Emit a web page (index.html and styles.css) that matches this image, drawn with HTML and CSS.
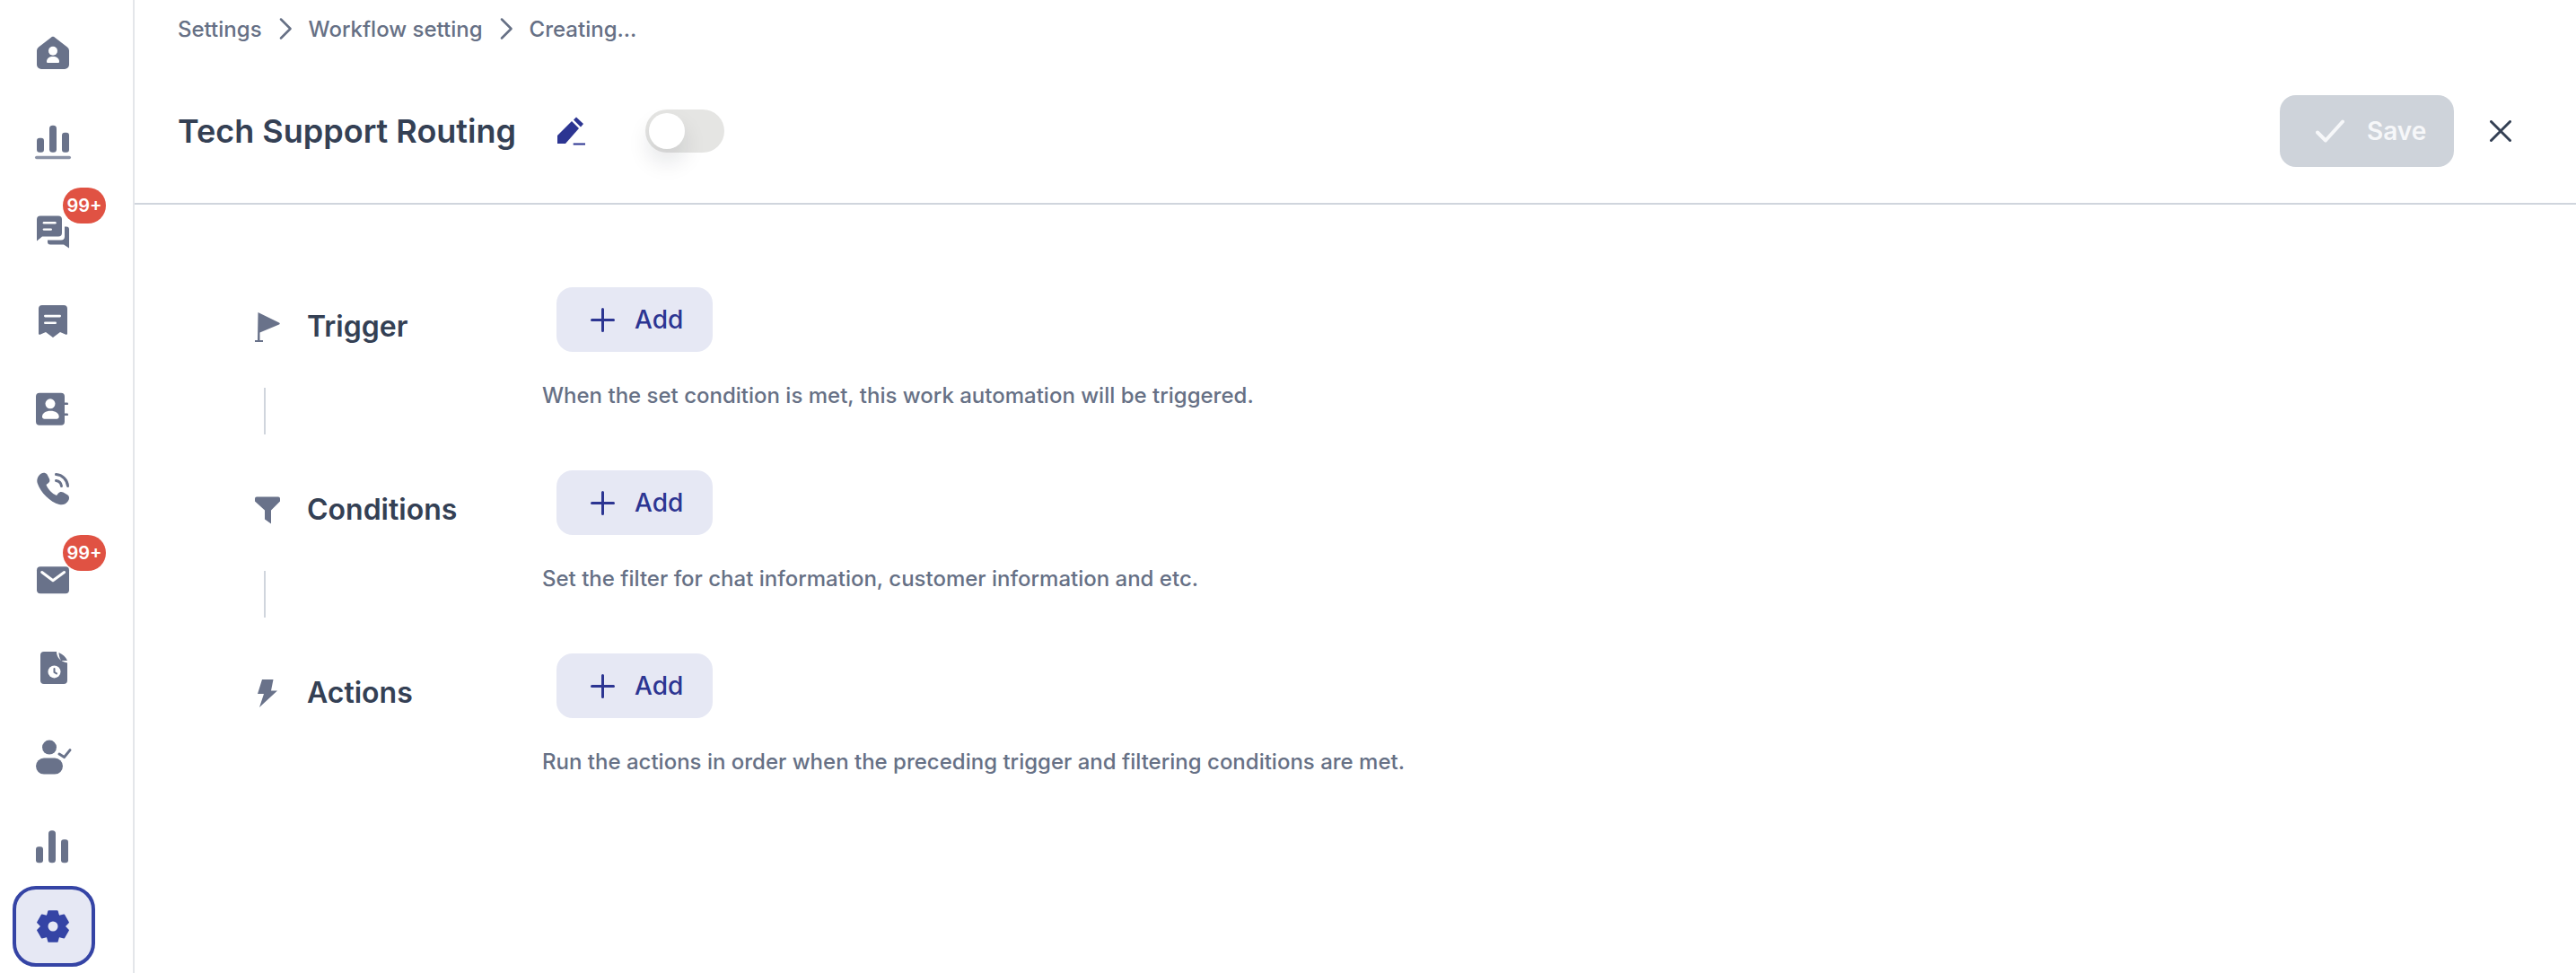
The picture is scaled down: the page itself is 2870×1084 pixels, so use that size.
FILE: index.html
```html
<!DOCTYPE html>
<html lang="en">

<head>
    <meta charset="UTF-8">
    <meta name="viewport" content="width=device-width, initial-scale=1.0">
    <title>Tech Support Routing</title>
    <link rel="stylesheet" href="styles.css">
</head>

<body>
    <div class="app">
        <nav class="sidebar">
            <a class="nav-item">
                <svg class="nav-icon" viewBox="0 0 60 60"><g transform="translate(11 12)">
                    <path d="M15.6.9a3.6 3.6 0 0 1 4.8 0L34 11.6a5 5 0 0 1 2 4V31a5 5 0 0 1-5 5H5a5 5 0 0 1-5-5V15.6a5 5 0 0 1 2-4z"/>
                    <circle class="cut" cx="18" cy="15.7" r="5"/>
                    <path class="cut" d="M11 27.5c0-3.500 3-5.500 7-5.500s7 2 7 5.500c0 1-.5 1.500-1.500 1.500h-11c-1 0-1.500-.5-1.500-1.500z"/>
                </g></svg>
            </a>
            <a class="nav-item">
                <svg class="nav-icon" viewBox="0 0 60 60"><g transform="translate(9 13.700)">
                    <rect x="2" y="14" width="8" height="16" rx="3"/>
                    <rect x="16" y="0" width="8" height="30" rx="3.500"/>
                    <rect x="30" y="8" width="8" height="22" rx="3"/>
                    <rect class="soft" x="0" y="34" width="40" height="3.500" rx="1.700"/>
                </g></svg>
            </a>
            <a class="nav-item">
                <svg class="nav-icon" viewBox="0 0 60 60"><g transform="translate(11 16.400)">
                    <path d="M4 0H24a4 4 0 0 1 4 4V19a4 4 0 0 1-4 4H6L0 28V4a4 4 0 0 1 4-4z"/>
                    <path d="M31 12h2a3 3 0 0 1 3 3V36l-6-4H15a3 3 0 0 1-3-3v-2H27a4 4 0 0 0 4-4z"/>
                    <rect class="cut" x="6.700" y="6.700" width="15" height="2.400" rx="1.200"/>
                    <rect class="cut" x="6.700" y="14" width="10.300" height="2.400" rx="1.200"/>
                </g></svg>
                <span class="badge">99+</span>
            </a>
            <a class="nav-item">
                <svg class="nav-icon" viewBox="0 0 60 60"><g transform="translate(13 19.100)">
                    <path d="M4 0H28a4 4 0 0 1 4 4V32l-1 1-7-3-8 6-8-6-7 3-1-1V4a4 4 0 0 1 4-4z"/>
                    <rect class="cut" x="6" y="10.700" width="19" height="2.600" rx="1.300"/>
                    <rect class="cut" x="6" y="18.300" width="14" height="2.600" rx="1.300"/>
                </g></svg>
            </a>
            <a class="nav-item">
                <svg class="nav-icon" viewBox="0 0 60 60"><g transform="translate(10 19.800)">
                    <rect width="32" height="36" rx="4"/>
                    <rect x="31" y="10.800" width="5" height="2.500" rx="1.200"/>
                    <rect x="31" y="22.800" width="5" height="2.500" rx="1.200"/>
                    <circle class="cut" cx="16" cy="12" r="5.500"/>
                    <path class="cut" d="M7 26.500c0-4 4-6.500 9.300-6.500s9.400 2.500 9.400 6.500c0 1.500-1 2.500-2.500 2.500H9.500C8 29 7 28 7 26.500z"/>
                </g></svg>
            </a>
            <a class="nav-item">
                <svg class="nav-icon" viewBox="0 0 60 60"><g transform="translate(11 11.500)">
                    <path d="M5 1C7-.5 10 0 11.500 2L14 7C15 9 14 11 12.500 12L10.500 13.500C12 18 17 23.500 22 25.500L24 23C25 21.500 27.500 21 29.500 22L34.500 25C36.500 26.500 36.500 29.500 35 31.500 33 35 29 36.500 25 35.500 15 33 4 22 .8 12-.5 8 1 3.500 5 1z"/>
                    <path class="arc" d="M21.500 2A14 14 0 0 1 34.500 15"/>
                    <path class="arc" d="M21.500 9A7 7 0 0 1 27.500 15"/>
                </g></svg>
            </a>
            <a class="nav-item">
                <svg class="nav-icon" viewBox="0 0 60 60"><g transform="translate(11 18.200)">
                    <rect width="36" height="30" rx="4"/>
                    <path class="cut-line" d="M5.700 6.300 18 15.500 30.600 6.300"/>
                </g></svg>
                <span class="badge badge-mail">99+</span>
            </a>
            <a class="nav-item">
                <svg class="nav-icon" viewBox="0 0 60 60"><g transform="translate(15 15.900)">
                    <path d="M4 0H18C18 6 22 11 30 12.500V32a4 4 0 0 1-4 4H4a4 4 0 0 1-4-4V4a4 4 0 0 1 4-4z"/>
                    <path d="M20.500 1C25 3 28.500 6 30 10H23C21.500 7.500 20.500 4 20.500 1z"/>
                    <circle class="cut" cx="15.500" cy="22.500" r="7"/>
                    <path class="arc thin" d="M15.500 19v4l2.500 1.500"/>
                </g></svg>
            </a>
            <a class="nav-item">
                <svg class="nav-icon" viewBox="0 0 60 60"><g transform="translate(10 17.600)">
                    <circle cx="15" cy="8" r="8"/>
                    <rect y="20" width="30" height="18" rx="9"/>
                    <path class="arc" d="M26 15.500l5.500 3.500 6.500-8"/>
                </g></svg>
            </a>
            <a class="nav-item">
                <svg class="nav-icon" viewBox="0 0 60 60"><g transform="translate(10 20.300)">
                    <rect y="18" width="8" height="18" rx="3"/>
                    <rect x="14" width="8" height="36" rx="3.500"/>
                    <rect x="28" y="10" width="8" height="26" rx="3"/>
                </g></svg>
            </a>
            <a class="nav-item active">
                <svg class="nav-icon" viewBox="0 0 60 60"><g transform="translate(11 12)">
                    <g transform="translate(18 18) scale(.94) translate(-18 -18)">
                        <polygon class="gear" points="13,0 23,0 24.750,6.310 31.090,4.670 36.090,13.330 31.500,18 36.090,22.670 31.090,31.330 24.750,29.690 23,36 13,36 11.250,29.690 4.910,31.330 -.09,22.670 4.500,18 -.09,13.330 4.910,4.670 11.250,6.310"/>
                    </g>
                    <circle class="gear-hole" cx="18" cy="18" r="5.500"/>
                </g></svg>
            </a>
        </nav>

        <main class="content">
            <header class="page-head">
                <div class="crumbs">
                    <span>Settings</span>
                    <svg class="crumb-arrow" viewBox="0 0 14 24"><path d="M2 1.500 12.500 12 2 22.500"/></svg>
                    <span>Workflow setting</span>
                    <svg class="crumb-arrow" viewBox="0 0 14 24"><path d="M2 1.500 12.500 12 2 22.500"/></svg>
                    <span>Creating...</span>
                </div>
                <div class="title-row">
                    <h1 class="title">Tech Support Routing</h1>
                    <svg class="pen" viewBox="0 0 31 32">
                        <path d="M0 30V21L16 5 24 13 9 30z"/>
                        <path d="M18 3.500 21 .5 29 8 26 11.500z"/>
                        <rect x="17.700" y="29.500" width="13.300" height="2"/>
                    </svg>
                    <div class="toggle"><span class="knob"></span></div>
                    <div class="head-actions">
                        <button class="btn-save">
                            <svg class="save-check" viewBox="0 0 32 26"><path d="M2 14.500 11 23.500 30 2.500"/></svg>
                            Save
                        </button>
                        <svg class="close" viewBox="0 0 24 24"><path d="M1.500 1.500 22.500 22.500M22.500 1.500 1.500 22.500"/></svg>
                    </div>
                </div>
            </header>

            <section class="steps">
                <div class="step">
                    <div class="step-left">
                        <div class="step-head">
                            <svg class="step-icon" viewBox="0 0 28 33"><path d="M3.500 0 27 11.500Q28.500 12.500 27 13.500L5.500 22.500V31H9V33H0V31H3z"/></svg>
                            <span class="step-name">Trigger</span>
                        </div>
                        <div class="step-line"></div>
                    </div>
                    <div class="step-right">
                        <button class="btn-add">
                            <svg class="plus" viewBox="0 0 27 27"><path d="M13.500 1.500V25.500M1.500 13.500H25.500"/></svg>
                            Add
                        </button>
                        <p class="step-desc">When the set condition is met, this work automation will be triggered.</p>
                    </div>
                </div>
                <div class="step">
                    <div class="step-left">
                        <div class="step-head">
                            <svg class="step-icon" viewBox="0 0 28 33"><path d="M2 1.500H26Q28 1.500 28 3.500V6.500L18 16.500V31.500L11 26.500V16.500L0 6.500V3.500Q0 1.500 2 1.500z"/></svg>
                            <span class="step-name">Conditions</span>
                        </div>
                        <div class="step-line"></div>
                    </div>
                    <div class="step-right">
                        <button class="btn-add">
                            <svg class="plus" viewBox="0 0 27 27"><path d="M13.500 1.500V25.500M1.500 13.500H25.500"/></svg>
                            Add
                        </button>
                        <p class="step-desc">Set the filter for chat information, customer information and etc.</p>
                    </div>
                </div>
                <div class="step">
                    <div class="step-left">
                        <div class="step-head">
                            <svg class="step-icon" viewBox="0 0 28 33"><path d="M8 1H20.500L18 13.500H25L5 32 10 17H3z"/></svg>
                            <span class="step-name">Actions</span>
                        </div>
                    </div>
                    <div class="step-right">
                        <button class="btn-add">
                            <svg class="plus" viewBox="0 0 27 27"><path d="M13.500 1.500V25.500M1.500 13.500H25.500"/></svg>
                            Add
                        </button>
                        <p class="step-desc">Run the actions in order when the preceding trigger and filtering conditions are met.</p>
                    </div>
                </div>
            </section>
        </main>
    </div>
</body>

</html>
```

FILE: styles.css
```css
html,
body {
    margin: 0;
    height: 100%;
    background-color: #fff;
    font-family: Inter, "Noto Sans", sans-serif;
    overflow: hidden;
}

.app {
    display: flex;
    height: 1084px;
}

/* sidebar */
.sidebar {
    box-sizing: border-box;
    width: 150px;
    flex: none;
    border-right: 2px solid #e4e6ea;
    padding: 14px 0 0 14px;
    display: flex;
    flex-direction: column;
    gap: 7.3px;
}

.nav-item {
    position: relative;
    width: 92px;
    height: 90px;
    flex: none;
    box-sizing: border-box;
    display: flex;
    align-items: center;
    justify-content: center;
    border-radius: 26px;
}

.nav-item.active {
    background-color: #e6e8f4;
    border: 4px solid #3544a5;
}

.nav-icon {
    width: 60px;
    height: 60px;
    flex: none;
    fill: #69728a;
}

.nav-icon .cut {
    fill: #fff;
}

.nav-icon .soft {
    fill: #8a92a6;
}

.nav-icon .cut-line {
    fill: none;
    stroke: #fff;
    stroke-width: 3;
    stroke-linecap: round;
    stroke-linejoin: round;
}

.nav-icon .arc {
    fill: none;
    stroke: #69728a;
    stroke-width: 3;
    stroke-linecap: round;
    stroke-linejoin: round;
}

.nav-icon .thin {
    stroke-width: 2;
}

.nav-icon .gear {
    fill: #3544a5;
    stroke: #3544a5;
    stroke-width: 2;
    stroke-linejoin: round;
}

.nav-icon .gear-hole {
    fill: #e6e8f4;
}

.badge {
    position: absolute;
    left: 56px;
    top: 0;
    width: 48px;
    height: 40px;
    border-radius: 20px;
    background-color: #e05243;
    color: #fff;
    font-size: 20px;
    font-weight: 600;
    line-height: 40px;
    text-align: center;
}

.badge-mail {
    top: -2px;
}

/* header */
.content {
    flex: 1;
    min-width: 0;
}

.page-head {
    height: 226px;
    padding-left: 48px;
    border-bottom: 2px solid #d0d5dd;
}

.crumbs {
    height: 64px;
    margin-bottom: 2px;
    display: flex;
    align-items: center;
    gap: 19px;
    font-size: 24px;
    font-weight: 500;
    color: #667085;
}

.crumb-arrow {
    width: 14px;
    height: 24px;
    fill: none;
    stroke: #667085;
    stroke-width: 2.5;
    stroke-linecap: round;
    stroke-linejoin: round;
}

.title-row {
    height: 160px;
    display: flex;
    align-items: center;
    padding-right: 72px;
}

.title {
    margin: 0 46px 0 0;
    font-size: 36px;
    font-weight: 600;
    color: #344054;
}

.pen {
    width: 31px;
    height: 32px;
    fill: #2c3592;
    margin-right: 67px;
    flex: none;
}

.toggle {
    width: 88px;
    height: 48px;
    box-sizing: border-box;
    padding: 4px;
    border-radius: 24px;
    background-color: #e5e5e3;
}

.knob {
    display: block;
    width: 40px;
    height: 40px;
    border-radius: 50%;
    background-color: #fff;
    box-shadow: 0 14px 26px rgba(16, 24, 40, 0.12);
}

.head-actions {
    margin-left: auto;
    display: flex;
    align-items: center;
    gap: 40px;
}

.btn-save {
    width: 194px;
    height: 80px;
    border: none;
    border-radius: 18px;
    background-color: #ced3da;
    color: #f6f7f9;
    font-family: inherit;
    font-size: 28px;
    font-weight: 600;
    display: flex;
    align-items: center;
    gap: 25px;
    padding: 0 0 0 40px;
}

.save-check {
    width: 32px;
    height: 26px;
    fill: none;
    stroke: #f6f7f9;
    stroke-width: 4;
    stroke-linecap: round;
    stroke-linejoin: round;
}

.close {
    width: 24px;
    height: 24px;
    fill: none;
    stroke: #344054;
    stroke-width: 3;
    stroke-linecap: round;
}

/* steps */
.steps {
    padding: 92px 0 0 134px;
}

.step {
    display: grid;
    grid-template-columns: 320px 1fr;
    height: 204px;
}

.step-left {
    padding-top: 24px;
}

.step-head {
    display: flex;
    align-items: center;
    height: 40px;
    gap: 30px;
}

.step-icon {
    width: 28px;
    height: 33px;
    fill: #69728a;
    flex: none;
}

.step-name {
    margin-top: -2px;
    font-size: 32px;
    font-weight: 600;
    color: #344054;
}

.step-line {
    width: 2px;
    height: 52px;
    margin: 48px 0 0 10px;
    background-color: #d0d5dd;
}

.btn-add {
    width: 174px;
    height: 72px;
    margin-left: 16px;
    border: none;
    border-radius: 18px;
    background-color: #e6e8f4;
    color: #2c3592;
    font-family: inherit;
    font-size: 28px;
    font-weight: 500;
    display: flex;
    align-items: center;
    gap: 22px;
    padding: 0 0 0 38px;
}

.plus {
    width: 27px;
    height: 27px;
    fill: none;
    stroke: #2c3592;
    stroke-width: 3;
    stroke-linecap: round;
}

.step-desc {
    margin: 31px 0 0;
    font-size: 24px;
    font-weight: 500;
    line-height: 36px;
    color: #667085;
}
```
